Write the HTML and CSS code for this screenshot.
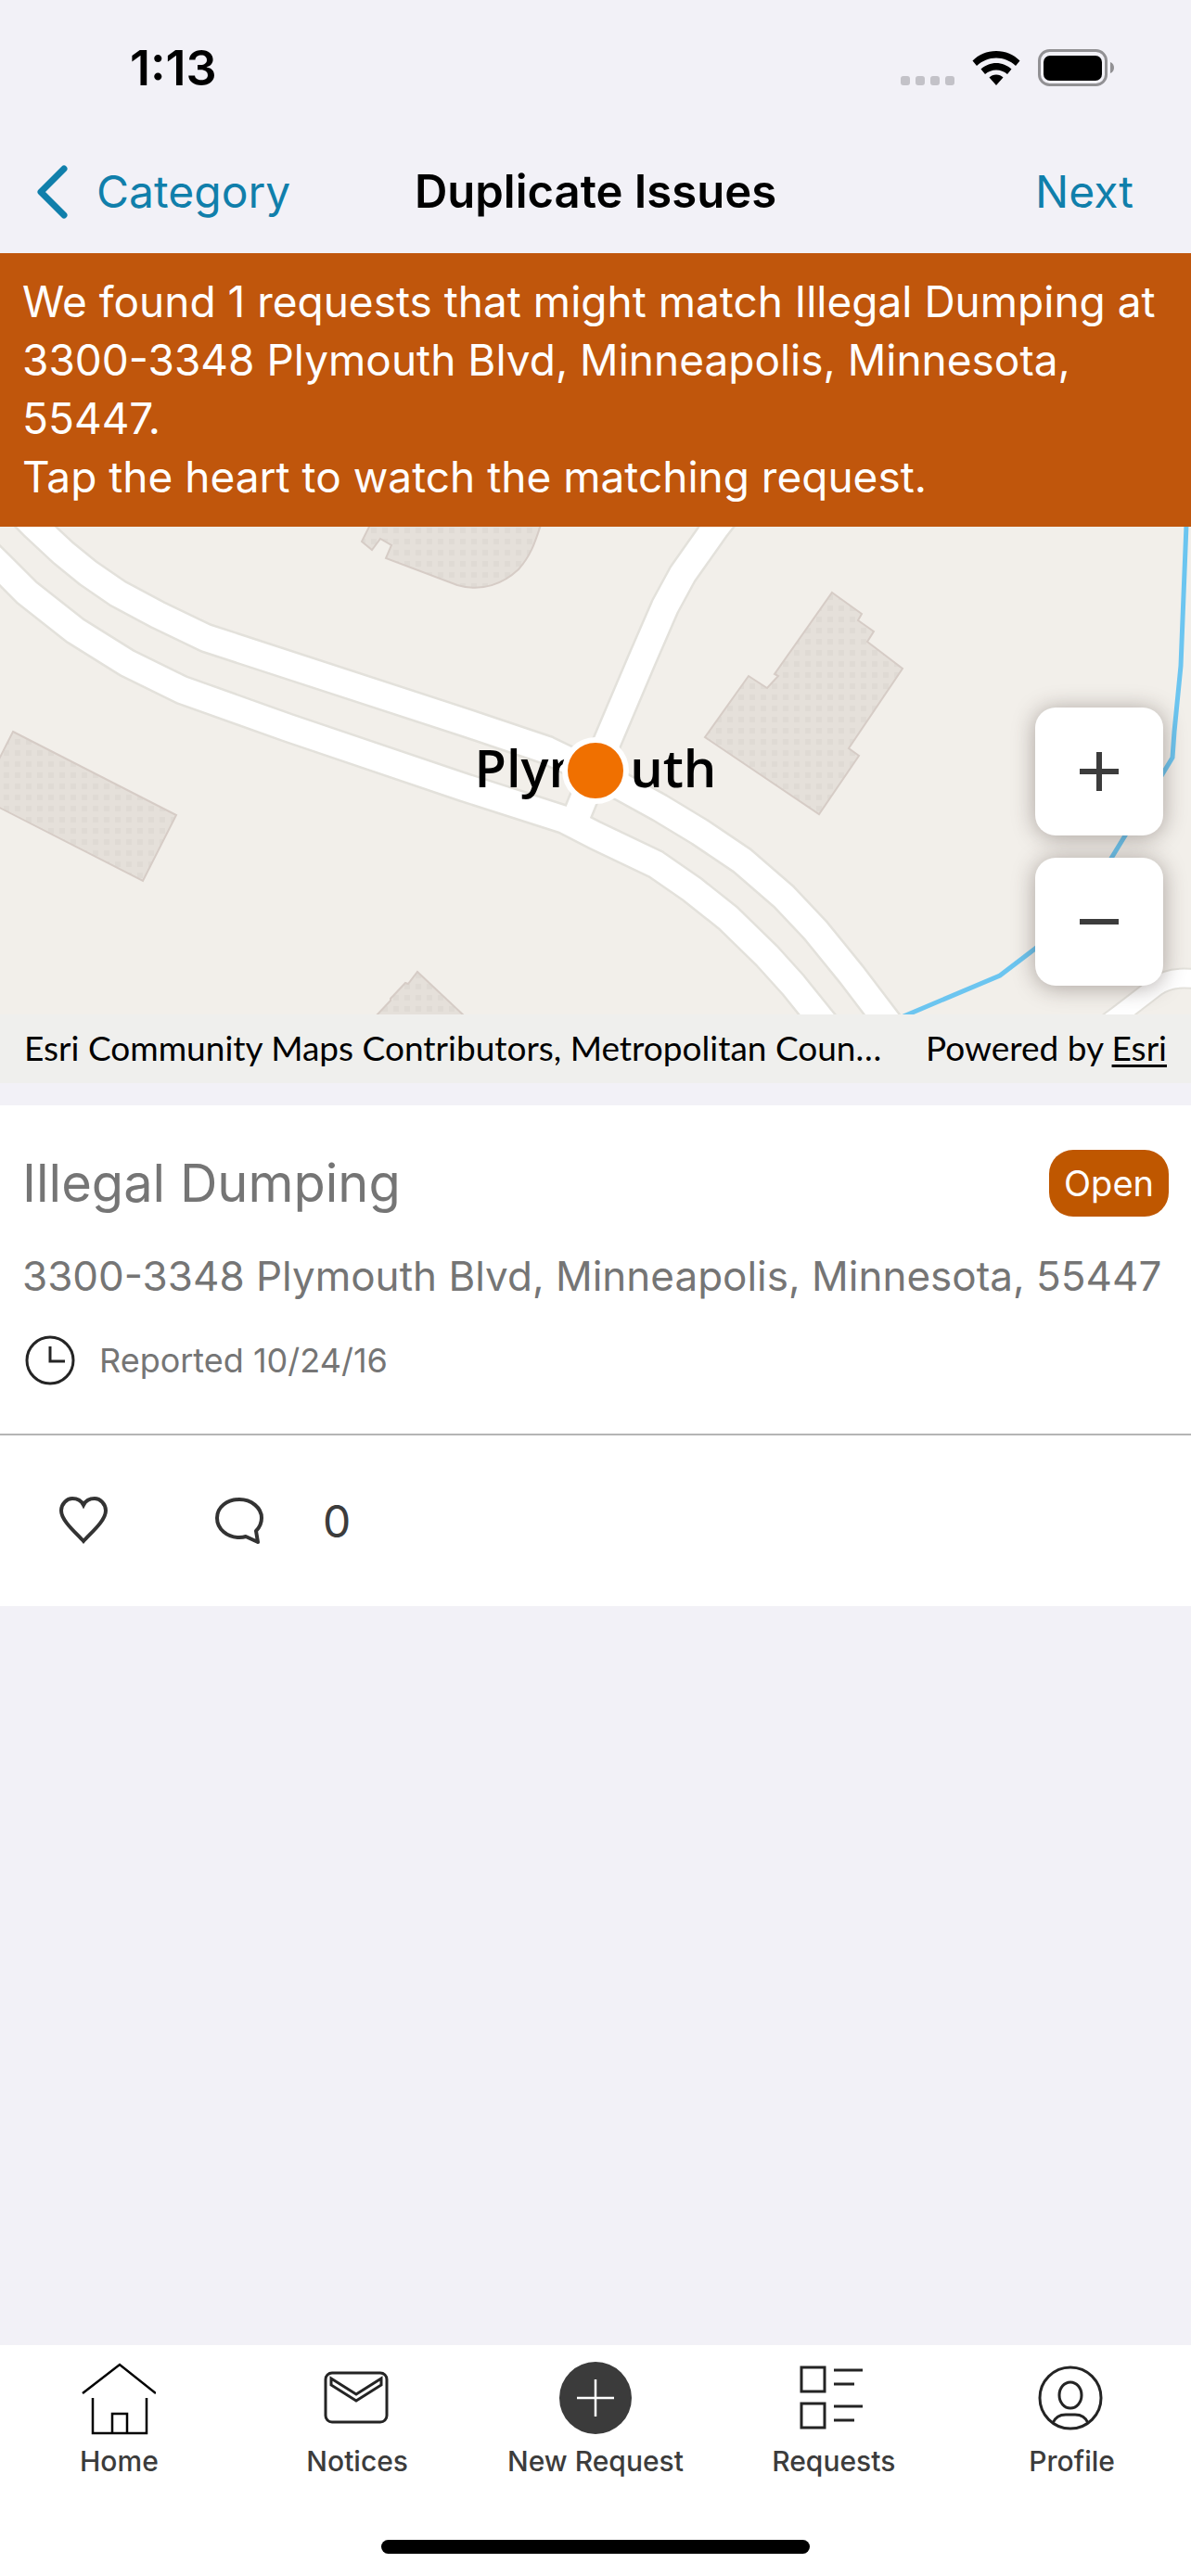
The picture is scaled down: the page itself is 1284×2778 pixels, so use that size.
FILE: index.html
```html
<!DOCTYPE html>
<html lang="en">

<head>
    <meta charset="UTF-8">
    <meta name="viewport" content="width=device-width, initial-scale=1.0">
    <title>Duplicate Issues</title>

    <link rel="stylesheet" href="styles.css">
</head>

<body>

    <div class="status-bar">
        <span class="time">1:13</span>
        <div class="status-icons">
            <svg width="58" height="40" viewBox="0 0 58 40" fill="#c3c2c8">
                <rect x="0" y="29" width="10" height="10" rx="3"/>
                <rect x="16" y="29" width="10" height="10" rx="3"/>
                <rect x="32" y="29" width="10" height="10" rx="3"/>
                <rect x="48" y="29" width="10" height="10" rx="3"/>
            </svg>
            <svg width="52" height="40" viewBox="0 0 52 40">
                <path d="M26 2C36 2 45 6 51.5 12.5L47 18C41 12.5 34 9.500 26 9.500S11 12.5 5 18L.5 12.5C7 6 16 2 26 2z"/>
                <path d="M26 15C32 15 38 17.5 42.5 21.5L38 27C34.5 24 30.5 22.5 26 22.5S17.5 24 14 27L9.5 21.5C14 17.5 20 15 26 15z"/>
                <path d="M26 27.5C29 27.5 31.5 28.5 33.5 30.5L26 39L18.5 30.5C20.5 28.5 23 27.5 26 27.5z"/>
            </svg>
            <svg width="83" height="40" viewBox="0 0 83 40">
                <rect x="1.5" y="1.5" width="72" height="37" rx="11" fill="none" stroke="#929194" stroke-width="3"/>
                <rect x="6" y="7" width="63" height="27" rx="7"/>
                <path d="M78 14C81 15 82 17.5 82 20S81 25 78 26z" fill="#929194"/>
            </svg>
        </div>
    </div>

    <header class="nav-bar">
        <a class="nav-link nav-back" href="#category">
            <svg width="34" height="58" viewBox="0 0 34 58" fill="none" stroke="currentColor" stroke-width="7" stroke-linecap="round" stroke-linejoin="round">
                <path d="M29 4L4 29L29 54"/>
            </svg>
            Category
        </a>
        <h1 class="nav-title">Duplicate Issues</h1>
        <a class="nav-link nav-next" href="#next">Next</a>
    </header>

    <main>
        <p class="banner">We found 1 requests that might match Illegal Dumping at 3300-3348 Plymouth Blvd, Minneapolis, Minnesota, 55447.<br>Tap the heart to watch the matching request.</p>

        <section class="map">
            <svg class="map-canvas" viewBox="0 0 1284 526" preserveAspectRatio="xMidYMid slice">
                <defs>
                    <pattern id="dots" width="12" height="12" patternUnits="userSpaceOnUse">
                        <rect width="12" height="12" fill="#e5e0da"/>
                        <rect x="4" y="1" width="6" height="6" fill="#dfdad4"/>
                    </pattern>
                    <g id="roads" fill="none" stroke-linejoin="round">
                        <path d="M8 -30L38 0L68 28L95 50L127 72L170 95L222 120L504 212L590 241L642 266L671 281L711 303L754 329L800 360L845 399L879 435L918 483L975 558"/>
                        <path d="M-30 12L0 42L29 71L81 112L137 147L196 176L311 217L500 281L609 316L642 333L707 364L746 391L785 422L827 463L855 494L905 556"/>
                        <path d="M794 -28L772 0L736 51L717 86L691 146L655 231L642 262L620 316"/>
                    </g>
                </defs>

                <!-- buildings -->
                <g fill="url(#dots)" stroke="#d6ccc6" stroke-width="2">
                    <path d="M399 -2L390 16L401 25L410 13L422 20L416 34L493 63C520 71 543 61 559 46C573 30 577 16 583 -2z"/>
                    <path d="M14 221L190 311L154 382L-22 292z"/>
                    <path d="M897 71L929 94L925 101L942 113L935 124L973 153L915 239L926 247L883 310L760 227L807 161L827 174L839 161L835 159z"/>
                    <path d="M405 528L421 511V509L437 492L440 493L450 480L501 528z"/>
                </g>

                <!-- roads -->
                <use href="#roads" stroke="#e3e1db" stroke-width="33"/>
                <path d="M1195 535L1207 526L1246 496Q1262 484 1290 488" fill="none" stroke="#e3e1db" stroke-width="23"/>
                <use href="#roads" stroke="#fff" stroke-width="28"/>
                <path d="M1195 535L1207 526L1246 496Q1262 484 1290 488" fill="none" stroke="#fff" stroke-width="19"/>

                <!-- stream -->
                <path d="M1279 -2L1273 150L1266 221L1264 249L1213 333L1160 420L1116 455L1078 484L974 528" fill="none" stroke="#6cc5f0" stroke-width="5"/>

                <text class="map-label" x="642" y="281">Plymouth</text>
                <circle cx="642" cy="263" r="33" fill="#f07000" stroke="#fff" stroke-width="6"/>
            </svg>

            <div class="zoom">
                <button class="zoom-btn" type="button" aria-label="Zoom in">
                    <svg width="42" height="42" viewBox="0 0 42 42" stroke="#3c3c3c" stroke-width="6">
                        <path d="M0 21H42M21 0V42"/>
                    </svg>
                </button>
                <button class="zoom-btn" type="button" aria-label="Zoom out">
                    <svg width="42" height="42" viewBox="0 0 42 42" stroke="#3c3c3c" stroke-width="6">
                        <path d="M0 21H42"/>
                    </svg>
                </button>
            </div>
        </section>

        <div class="attribution">
            <span>Esri Community Maps Contributors, Metropolitan Coun…</span>
            <span>Powered by <a href="#esri">Esri</a></span>
        </div>

        <article class="card">
            <div class="card-body">
                <div class="card-header">
                    <h2>Illegal Dumping</h2>
                    <span class="badge">Open</span>
                </div>
                <p class="address">3300-3348 Plymouth Blvd, Minneapolis, Minnesota, 55447</p>
                <div class="reported">
                    <svg width="54" height="54" viewBox="0 0 54 54" fill="none" stroke="#242424" stroke-width="3">
                        <circle cx="27" cy="27" r="25"/>
                        <path d="M27 12V28H43"/>
                    </svg>
                    <span>Reported 10/24/16</span>
                </div>
            </div>
            <div class="card-actions">
                <button class="action" type="button" aria-label="Watch">
                    <svg width="52" height="54" viewBox="0 0 52 54" fill="none" stroke="#333" stroke-width="4">
                        <path d="M26 49C18 40 2 27 2 16C2 9 8 3 14 3C20 3 24 6 26 10C28 6 32 3 38 3C44 3 50 9 50 16C50 27 34 40 26 49z"/>
                    </svg>
                </button>
                <button class="action" type="button" aria-label="0 comments">
                    <svg width="52" height="50" viewBox="0 0 52 50" fill="none" stroke="#333" stroke-width="4" stroke-linejoin="round">
                        <path d="M33 42C30 43 28 43 26 43C13 43 2 34 2 22S13 2 26 2S50 11 50 22C50 28 48 32 44 36L46 48z"/>
                    </svg>
                    <span>0</span>
                </button>
            </div>
        </article>
    </main>

    <footer class="tab-bar">
        <nav class="tabs">
            <a class="tab" href="#home">
                <svg width="80" height="80" viewBox="0 0 80 80" fill="none" stroke="#000" stroke-width="2.5">
                    <path d="M1 35L41 4L80 35M12 40V78H70V40M33 78V57H49V78"/>
                </svg>
                Home
            </a>
            <a class="tab" href="#notices">
                <svg width="80" height="80" viewBox="0 0 80 80" fill="none" stroke="#242424" stroke-width="3">
                    <rect x="6" y="13" width="66" height="53" rx="7"/>
                    <path d="M12 19L39 36L66 19V26L39 43L12 26z"/>
                </svg>
                Notices
            </a>
            <a class="tab" href="#new">
                <svg width="80" height="80" viewBox="0 0 80 80">
                    <circle cx="40" cy="40" r="39" fill="#3b3b3b"/>
                    <path d="M20 40H60M40 20V60" stroke="#fff" stroke-width="2.5"/>
                </svg>
                New Request
            </a>
            <a class="tab" href="#requests">
                <svg width="80" height="80" viewBox="0 0 80 80" fill="none" stroke="#242424" stroke-width="3">
                    <path d="M5 7H30V33H5zM5 46H30V72H5zM40 10H71M40 25H62M40 49H71M40 64H62"/>
                </svg>
                Requests
            </a>
            <a class="tab" href="#profile">
                <svg width="80" height="80" viewBox="0 0 80 80" fill="none" stroke="#242424" stroke-width="3">
                    <circle cx="38" cy="40" r="33"/>
                    <ellipse cx="38" cy="37" rx="12" ry="14"/>
                    <path d="M19 67C22 60 27 58 33 58H43C49 58 54 60 57 67"/>
                </svg>
                Profile
            </a>
        </nav>
        <div class="home-indicator"></div>
    </footer>

</body>
</html>
```

FILE: styles.css
```css
* {
    box-sizing: border-box;
}

body {
    display: flex;
    flex-direction: column;
    min-height: 100vh;
    margin: 0;
    font-family: Inter, "Liberation Sans", sans-serif;
    background-color: #f2f1f7;
}

svg {
    display: block;
    flex-shrink: 0;
}

h1, h2, p {
    margin: 0;
}

button {
    padding: 0;
    border: none;
    background: none;
    font-family: inherit;
    cursor: pointer;
}

/* status bar */
.status-bar {
    display: flex;
    align-items: center;
    justify-content: space-between;
    height: 146px;
    padding: 0 82px 0 140px;
}

.time {
    font-size: 52px;
    font-weight: 600;
}

.status-icons {
    display: flex;
    align-items: center;
    gap: 19px;
}

/* navigation */
.nav-bar {
    display: grid;
    grid-template-columns: 1fr auto 1fr;
    align-items: center;
    height: 127px;
    padding: 0 40px 6px;
}

.nav-link {
    font-size: 48px;
    color: #107fab;
    text-decoration: none;
}

.nav-back {
    display: flex;
    align-items: center;
    gap: 30px;
}

.nav-title {
    font-size: 49px;
    font-weight: 600;
}

.nav-next {
    padding-right: 22px;
    text-align: right;
}

.banner {
    padding: 21px 24px 22px;
    font-size: 46px;
    line-height: 63px;
    color: #fff;
    background-color: #c0560c;
}

/* map */
.map {
    position: relative;
    background-color: #f2efea;
}

.map-canvas {
    width: 100%;
    height: 526px;
}

.map-label {
    font-family: "Open Sans", sans-serif;
    font-size: 56px;
    font-weight: 600;
    text-anchor: middle;
}

.zoom {
    position: absolute;
    right: 30px;
    bottom: 31px;
    display: flex;
    flex-direction: column;
    gap: 24px;
}

.zoom-btn {
    display: grid;
    place-items: center;
    width: 138px;
    height: 138px;
    border-radius: 22px;
    background-color: #fff;
    box-shadow: 0 2px 24px rgba(60, 45, 40, 0.4);
}

.attribution {
    display: flex;
    justify-content: space-between;
    padding: 0 26px 2px;
    font-family: Lato, sans-serif;
    font-size: 37px;
    line-height: 72px;
    white-space: nowrap;
    background-color: #efefed;
}

.attribution a {
    color: inherit;
    text-underline-offset: 4px;
}

/* request card */
.card {
    margin-top: 24px;
    background-color: #fff;
}

.card-body {
    display: flex;
    flex-direction: column;
    gap: 37px;
    padding: 48px 24px 52px;
    color: #757575;
    border-bottom: 2px solid #b5b5b5;
}

.card-header {
    display: flex;
    align-items: center;
    justify-content: space-between;
}

.card-header h2 {
    font-size: 56px;
    font-weight: 400;
}

.badge {
    padding: 0 16px;
    font-size: 38px;
    line-height: 72px;
    color: #fff;
    background-color: #bf5700;
    border-radius: 26px;
}

.address {
    font-size: 44px;
    line-height: 54px;
}

.reported {
    display: flex;
    align-items: center;
    gap: 26px;
    padding-left: 3px;
    font-size: 36px;
}

.card-actions {
    display: flex;
    align-items: center;
    gap: 116px;
    height: 184px;
    padding: 0 64px;
}

.action {
    display: flex;
    align-items: center;
    gap: 64px;
    font-size: 48px;
    color: #3c3c3c;
}

/* bottom tabs */
.tab-bar {
    margin-top: auto;
    padding: 17px 0 24px;
    background-color: #fff;
}

.tabs {
    display: grid;
    grid-template-columns: repeat(5, 1fr);
}

.tab {
    display: flex;
    flex-direction: column;
    align-items: center;
    gap: 10px;
    font-size: 30px;
    font-weight: 500;
    line-height: 36px;
    color: #3c3c3c;
    text-decoration: none;
}

.home-indicator {
    width: 36%;
    height: 15px;
    margin: 67px auto 0;
    border-radius: 8px;
    background-color: #000;
}
```
